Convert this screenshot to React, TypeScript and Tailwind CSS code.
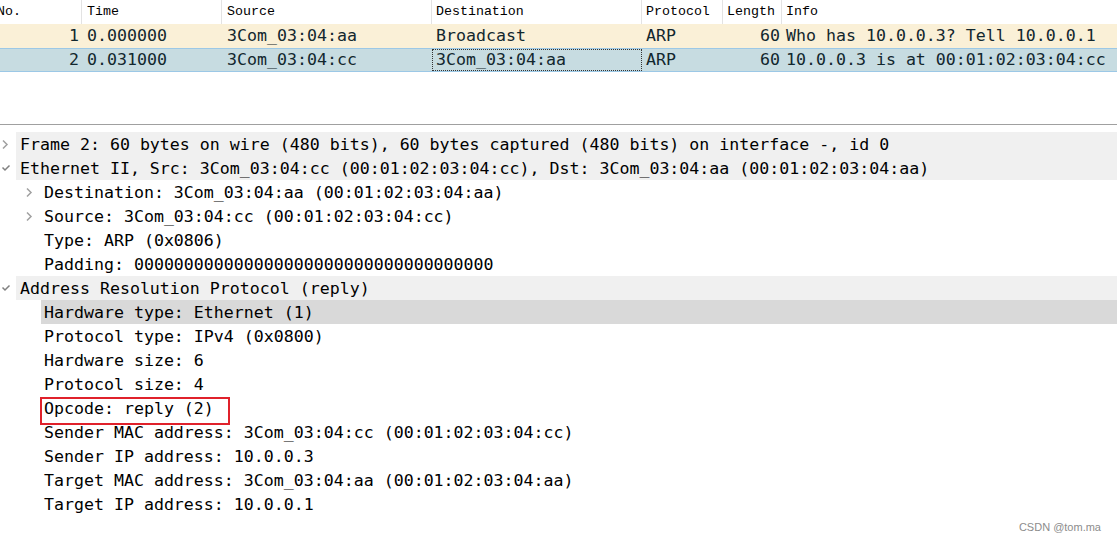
import React from 'react';

const mono = { fontFamily: '"DejaVu Sans Mono", monospace' };
const headMono = { fontFamily: '"Liberation Mono", monospace' };

const cols = [
  { label: 'No.', w: 'w-[82px]', align: 'text-right pr-[3px]' },
  { label: 'Time', w: 'w-[140px]', align: 'pl-[5px]' },
  { label: 'Source', w: 'w-[210px]', align: 'pl-[5px]' },
  { label: 'Destination', w: 'w-[210px]', align: 'pl-[4px]' },
  { label: 'Protocol', w: 'w-[81px]', align: 'pl-[4px]' },
  { label: 'Length', w: 'w-[59px]', align: 'text-right pr-[2px]' },
  { label: 'Info', w: 'flex-1', align: 'pl-[4px]' },
];

const packets = [
  ['1', '0.000000', '3Com_03:04:aa', 'Broadcast', 'ARP', '60', 'Who has 10.0.0.3? Tell 10.0.0.1'],
  ['2', '0.031000', '3Com_03:04:cc', '3Com_03:04:aa', 'ARP', '60', '10.0.0.3 is at 00:01:02:03:04:cc'],
];

type Node = { text: string; level: number; icon?: 'closed' | 'open'; band?: boolean; selected?: boolean; boxed?: boolean };

const tree: Node[] = [
  { text: 'Frame 2: 60 bytes on wire (480 bits), 60 bytes captured (480 bits) on interface -, id 0', level: 0, icon: 'closed', band: true },
  { text: 'Ethernet II, Src: 3Com_03:04:cc (00:01:02:03:04:cc), Dst: 3Com_03:04:aa (00:01:02:03:04:aa)', level: 0, icon: 'open', band: true },
  { text: 'Destination: 3Com_03:04:aa (00:01:02:03:04:aa)', level: 1, icon: 'closed' },
  { text: 'Source: 3Com_03:04:cc (00:01:02:03:04:cc)', level: 1, icon: 'closed' },
  { text: 'Type: ARP (0x0806)', level: 1 },
  { text: 'Padding: 000000000000000000000000000000000000', level: 1 },
  { text: 'Address Resolution Protocol (reply)', level: 0, icon: 'open', band: true },
  { text: 'Hardware type: Ethernet (1)', level: 1, selected: true },
  { text: 'Protocol type: IPv4 (0x0800)', level: 1 },
  { text: 'Hardware size: 6', level: 1 },
  { text: 'Protocol size: 4', level: 1 },
  { text: 'Opcode: reply (2)', level: 1, boxed: true },
  { text: 'Sender MAC address: 3Com_03:04:cc (00:01:02:03:04:cc)', level: 1 },
  { text: 'Sender IP address: 10.0.0.3', level: 1 },
  { text: 'Target MAC address: 3Com_03:04:aa (00:01:02:03:04:aa)', level: 1 },
  { text: 'Target IP address: 10.0.0.1', level: 1 },
];

function Chevron({ open }: { open: boolean }) {
  return open ? (
    <svg width="10" height="10" viewBox="0 0 10 10" className="text-[#808080]">
      <path d="M1.5 4.5 L4 7 L8.5 2.5" fill="none" stroke="currentColor" strokeWidth="1.5" />
    </svg>
  ) : (
    <svg width="9" height="11" viewBox="0 0 9 11" className="text-[#a0a0a0]">
      <path d="M2 1.5 L6 5.5 L2 9.5" fill="none" stroke="currentColor" strokeWidth="1.5" />
    </svg>
  );
}

export default function App() {
  return (
    <div className="relative w-[1117px] h-[543px] overflow-hidden bg-white">
      {/* Packet list */}
      <div className="h-[124px]">
        <div className="flex h-6 items-center text-[13.3px] text-black" style={headMono}>
          {cols.map((c, i) => (
            <div
              key={c.label}
              className={`${c.w} h-full flex items-center shrink-0 ${i < cols.length - 1 ? 'border-r border-[#e3e3e3]' : ''} ${i === 0 ? '' : i === 5 ? 'pl-[4px]' : c.align}`}
            >
              <span className={i === 0 ? '-ml-[3px]' : ''}>{c.label}</span>
            </div>
          ))}
        </div>
        {packets.map((p, r) => (
          <div
            key={p[0]}
            className={`flex h-6 items-center text-[16.6px] text-[#12272e] ${r === 0 ? 'bg-[#faf0d7]' : 'bg-[#c7dce1] border-y border-[#9cc8e6]'}`}
            style={mono}
          >
            {p.map((v, i) => (
              <div
                key={i}
                className={`${cols[i].w} h-full flex items-center shrink-0 whitespace-nowrap ${cols[i].align} ${cols[i].align.includes('text-right') ? 'justify-end' : ''} ${r === 1 && i === 3 ? 'outline outline-1 outline-dotted outline-[#333] -outline-offset-1' : ''}`}
              >
                {v}
              </div>
            ))}
          </div>
        ))}
      </div>

      {/* Splitter */}
      <div className="h-[8px] border-t border-[#a0a0a0]" />

      {/* Packet details */}
      <div className="text-[16.6px] text-black" style={mono}>
        {tree.map((n, i) => (
          <div key={i} className="flex h-6">
            <div style={{ width: n.level * 24 }} className="shrink-0" />
            <div className="w-4 shrink-0 flex items-center pl-[1px]">
              {n.icon && <Chevron open={n.icon === 'open'} />}
            </div>
            <div
              className={`flex-1 flex items-center pl-1 whitespace-nowrap ${n.band ? 'bg-[#f0f0f0]' : ''} ${n.selected ? 'bg-[#d9d9d9] ml-px pl-[3px]' : ''}`}
            >
              <span className="relative translate-y-[1px]">
                {n.text}
                {n.boxed && (
                  <span className="absolute -left-[4px] -right-[16px] top-0 -bottom-[4px] border-2 border-[#e0212b]" />
                )}
              </span>
            </div>
          </div>
        ))}
      </div>

      <div
        className="absolute right-[16px] bottom-[8px] text-[11px] text-[#8c8c8c]"
        style={{ fontFamily: '"Liberation Sans", Arial, sans-serif' }}
      >
        CSDN @tom.ma
      </div>
    </div>
  );
}
